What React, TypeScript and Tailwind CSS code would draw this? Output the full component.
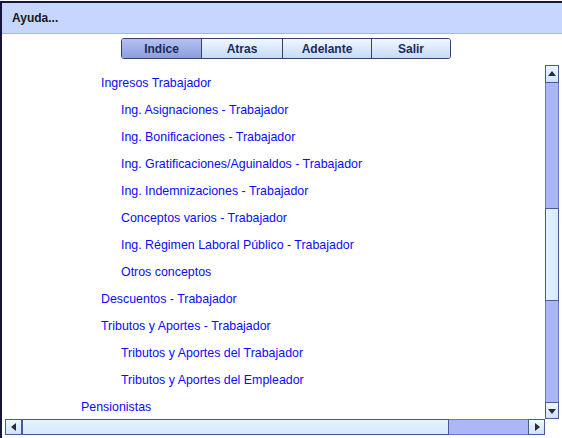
import React from "react";

const items: { t: string; l: number }[] = [
  { t: "Ingresos Trabajador", l: 1 },
  { t: "Ing. Asignaciones - Trabajador", l: 2 },
  { t: "Ing. Bonificaciones - Trabajador", l: 2 },
  { t: "Ing. Gratificaciones/Aguinaldos - Trabajador", l: 2 },
  { t: "Ing. Indemnizaciones - Trabajador", l: 2 },
  { t: "Conceptos varios - Trabajador", l: 2 },
  { t: "Ing. Régimen Laboral Público - Trabajador", l: 2 },
  { t: "Otros conceptos", l: 2 },
  { t: "Descuentos - Trabajador", l: 1 },
  { t: "Tributos y Aportes - Trabajador", l: 1 },
  { t: "Tributos y Aportes del Trabajador", l: 2 },
  { t: "Tributos y Aportes del Empleador", l: 2 },
  { t: "Pensionistas", l: 0 },
];

const indent = ["pl-[79px]", "pl-[99px]", "pl-[119px]"];

function Arrow({ dir }: { dir: "up" | "down" | "left" | "right" }) {
  const pts =
    dir === "up"
      ? "1,7 5,2 9,7"
      : dir === "down"
      ? "1,3 9,3 5,8"
      : dir === "left"
      ? "7,1 7,9 2,5"
      : "3,1 3,9 8,5";
  return (
    <svg width="10" height="10" viewBox="0 0 10 10">
      <polygon points={pts} fill="#2a2a3a" />
    </svg>
  );
}

export default function App() {
  const btn =
    "flex items-center justify-center h-full text-[12px] font-bold text-[#1c2a5c]";
  return (
    <div
      className="w-[562px] h-[437px] bg-white border-t-2 border-l-2 border-[#14143c] mt-[1px] flex flex-col overflow-hidden"
      style={{ fontFamily: '"Liberation Sans", Arial, sans-serif' }}
    >
      <div className="h-[31px] bg-[#c6d6fc] border-b border-[#a2b4ea] flex items-center pl-[10px] shrink-0">
        <span className="text-[12px] font-bold text-[#1a1a22]">Ayuda...</span>
      </div>
      <div className="mt-[4px] pl-[119px] shrink-0">
        <div className="flex h-[21px] w-[330px] border border-[#34416f] rounded-[3px] overflow-hidden">
          <div className={`${btn} w-[79px] bg-gradient-to-b from-[#b4c2f2] to-[#8c9ede]`}>Indice</div>
          <div className={`${btn} w-[81px] border-l border-[#34416f] bg-gradient-to-b from-[#f0f8ff] to-[#c6daf8]`}>Atras</div>
          <div className={`${btn} w-[89px] border-l border-[#34416f] bg-gradient-to-b from-[#f0f8ff] to-[#c6daf8]`}>Adelante</div>
          <div className={`${btn} w-[79px] border-l border-[#34416f] bg-gradient-to-b from-[#f0f8ff] to-[#c6daf8]`}>Salir</div>
        </div>
      </div>
      <div className="flex mt-[6px] h-[354px] shrink-0">
        <div className="w-[543px] pt-[5px] overflow-hidden">
          {items.map((it, i) => (
            <div
              key={i}
              className={`h-[27px] flex items-center ${indent[it.l]} text-[12.4px] text-[#0c0cff] whitespace-nowrap`}
            >
              {it.t}
            </div>
          ))}
        </div>
        <div className="w-[14px] flex flex-col h-[354px]">
          <div className="h-[18px] border border-[#4a5a92] bg-gradient-to-b from-[#eef8ff] to-[#cfe2fb] flex items-center justify-center">
            <Arrow dir="up" />
          </div>
          <div className="h-[125px] bg-[#aab8f8] border-l border-r border-[#6a7ac8]" />
          <div className="h-[93px] border border-[#4a5a92] bg-gradient-to-r from-[#e4f4ff] to-[#d6e8fd]" />
          <div className="flex-1 bg-[#aab8f8] border-l border-r border-[#6a7ac8]" />
          <div className="h-[17px] border border-[#4a5a92] bg-gradient-to-b from-[#eef8ff] to-[#cfe2fb] flex items-center justify-center">
            <Arrow dir="down" />
          </div>
        </div>
      </div>
      <div className="flex ml-[3px] h-[16px] w-[540px] shrink-0">
        <div className="w-[17px] border border-[#4a5a92] bg-gradient-to-b from-[#eef8ff] to-[#cfe2fb] flex items-center justify-center">
          <Arrow dir="left" />
        </div>
        <div className="w-[427px] border border-[#4a5a92] bg-gradient-to-b from-[#e4f4ff] to-[#d6e8fd]" />
        <div className="flex-1 bg-[#aab8f8] border-t border-b border-[#6a7ac8]" />
        <div className="w-[17px] border border-[#4a5a92] bg-gradient-to-b from-[#eef8ff] to-[#cfe2fb] flex items-center justify-center">
          <Arrow dir="right" />
        </div>
      </div>
    </div>
  );
}
